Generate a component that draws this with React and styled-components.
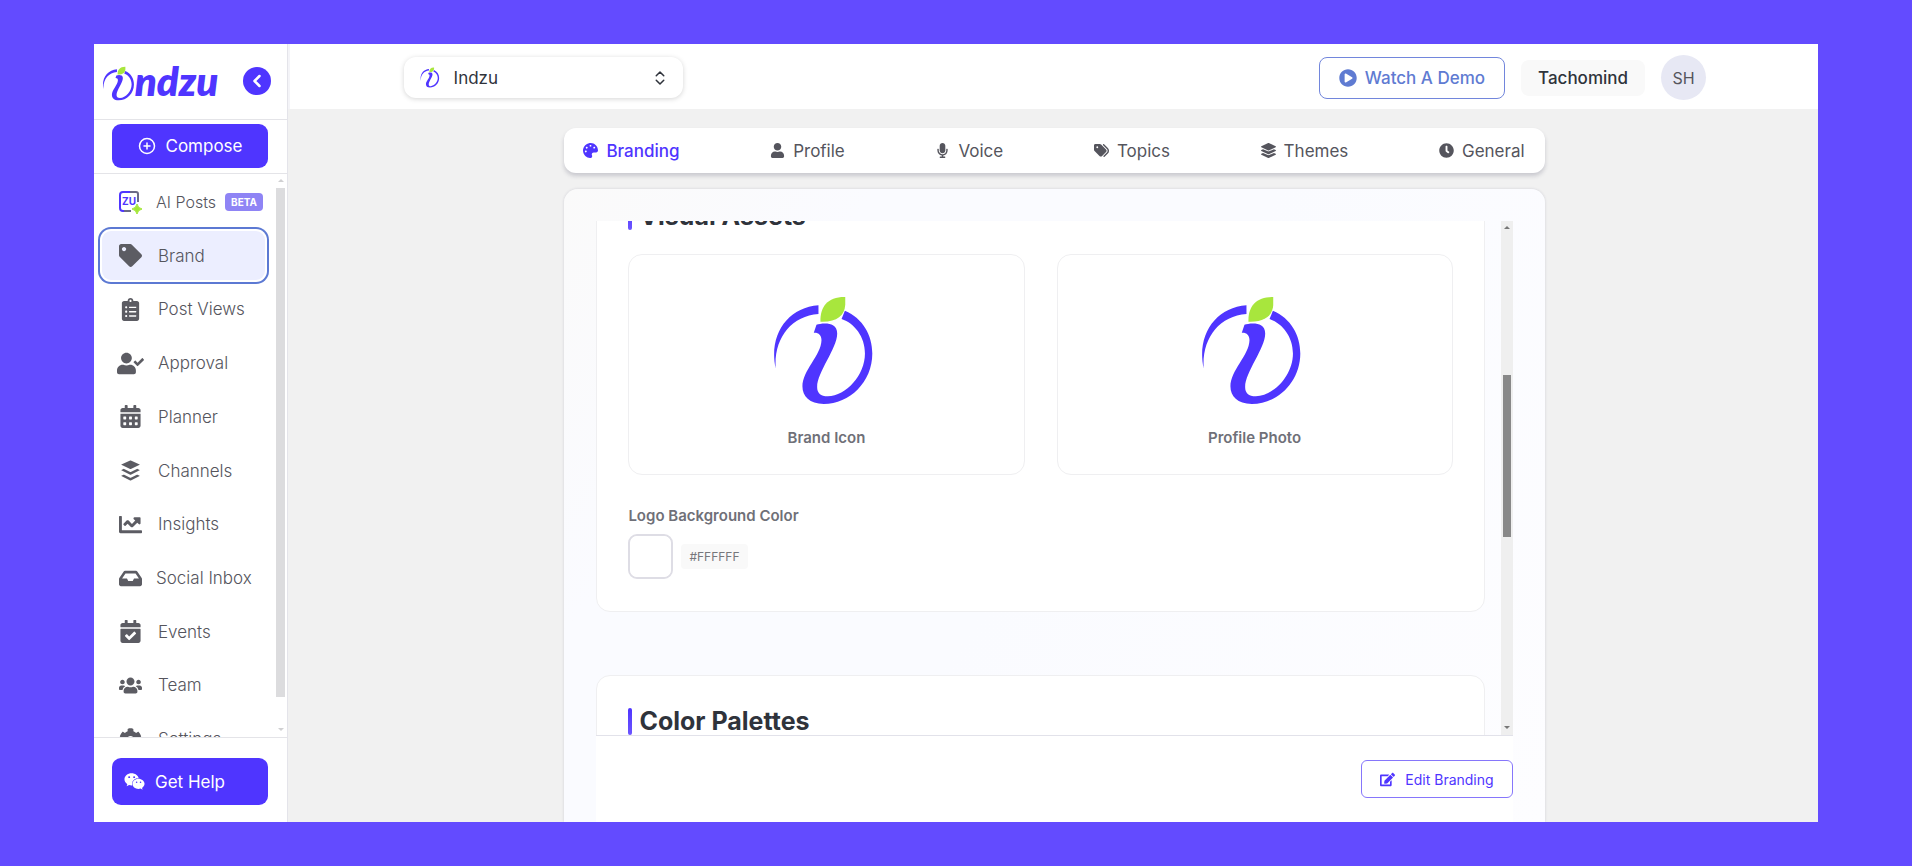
import React from "react";
import styled, { createGlobalStyle, css } from "styled-components";
import { ChevronLeft, ChevronsUpDown, CirclePlus } from "lucide-react";
import {
  FaBuffer,
  FaCalendarAlt,
  FaCalendarCheck,
  FaChartLine,
  FaClipboardList,
  FaClock,
  FaCog,
  FaEdit,
  FaInbox,
  FaLayerGroup,
  FaMicrophone,
  FaPalette,
  FaPlayCircle,
  FaTag,
  FaUser,
  FaUserCheck,
  FaUsers,
  FaWeixin,
} from "react-icons/fa";
import { FaTags } from "react-icons/fa6";

const primary = "#4f35ff";
const ink = "#2f333b";
const muted = "#55555d";

const GlobalStyle = createGlobalStyle`
  * { box-sizing: border-box; }
  body {
    margin: 0;
    background: #634bff;
    color: ${ink};
    font-family: Inter, "Open Sans", sans-serif;
    font-size: 17px;
  }
  button, select, input { font: inherit; color: inherit; }
  ul { list-style: none; margin: 0; padding: 0; }
  svg { flex: none; display: block; }
`;

const Page = styled.div`
  height: 100vh;
  min-height: 480px;
  padding: 44px 94px;
  display: flex;
`;

const Shell = styled.div`
  flex: 1;
  min-width: 0;
  display: flex;
  background: #f1f1f1;
  overflow: hidden;
`;

/* Sidebar */

const Sidebar = styled.aside`
  width: 194px;
  flex: none;
  display: flex;
  flex-direction: column;
  background: #fff;
  border-right: 1px solid #e4e4ea;
`;

const BrandBar = styled.div`
  height: 76px;
  flex: none;
  display: flex;
  align-items: center;
  justify-content: space-between;
  padding: 0 16px 2px 8px;
  border-bottom: 1px solid #e4e4e8;
`;

const Wordmark = styled.a`
  display: flex;
  align-items: flex-end;
  color: ${primary};
  text-decoration: none;
  font-family: Lato, sans-serif;
  font-size: 40px;
  line-height: 40px;
  font-style: italic;
  font-weight: 800;
`;

const CollapseButton = styled.button`
  width: 28px;
  height: 28px;
  padding: 0;
  display: grid;
  place-items: center;
  border: 0;
  border-radius: 50%;
  background: ${primary};
  color: #fff;
`;

const SideSection = styled.div`
  flex: none;
  padding: ${(p) => (p.$footer ? "20px 19px 17px 18px" : "4px 19px 5px 18px")};
  border-${(p) => (p.$footer ? "top" : "bottom")}: 1px solid #e4e4e8;
`;

const SolidButton = styled.button`
  width: 100%;
  height: ${(p) => (p.$start ? "47px" : "44px")};
  display: flex;
  align-items: center;
  justify-content: ${(p) => (p.$start ? "flex-start" : "center")};
  gap: 10px;
  padding: 0 12px;
  border: 0;
  border-radius: 9px;
  background: ${primary};
  color: #fff;
`;

const NavArea = styled.div`
  flex: 1;
  min-height: 0;
  display: flex;
  overflow: hidden;
`;

const NavList = styled.ul`
  flex: 1;
  height: 591px;
  margin-top: 1px;
  padding-left: 8px;
  display: flex;
  flex-direction: column;
`;

const NavItem = styled.li`
  flex: 1;
  display: flex;
  padding: 2px 0;
`;

const NavLink = styled.a`
  width: 163px;
  display: flex;
  align-items: center;
  gap: ${(p) => (p.$tight ? "12px" : "14px")};
  padding-left: 14px;
  border-radius: 9px;
  color: ${muted};
  font-weight: 300;
  font-size: ${(p) => (p.$small ? "16px" : "17px")};
  text-decoration: none;
  white-space: nowrap;
  ${(p) =>
    p.$active &&
    css`
      background: #eceeff;
      box-shadow: 0 0 0 2px #fff, 0 0 0 4px #5c79d3;
    `}
`;

const NavIcon = styled.span`
  width: 28px;
  flex: none;
  display: grid;
  place-items: center;
  color: #5c5c63;
  font-size: ${(p) => (p.$wide ? "27px" : "23px")};
`;

const BetaTag = styled.span`
  margin-left: -3px;
  padding: 0 6px;
  border-radius: 4px;
  background: #8f84f5;
  color: #fff;
  font-size: 10px;
  line-height: 18px;
  font-weight: 700;
`;

/* Scrollbars */

const Track = styled.div`
  flex: none;
  width: ${(p) => (p.$light ? "9px" : "12px")};
  margin: ${(p) => (p.$light ? "0 2px 0 0" : "0 0 0 16px")};
  display: flex;
  flex-direction: column;
  background: ${(p) => (p.$light ? "#fff" : "#efefef")};
`;

const Thumb = styled.div`
  flex: ${(p) => p.$size} 0 0;
  margin: 0 ${(p) => (p.$light ? "0" : "2px")};
  background: ${(p) => (p.$light ? "#dcdcde" : "#888")};
`;

const TrackSpace = styled.div`
  flex: ${(p) => p.$size} 0 0;
`;

const Arrow = styled.svg`
  width: 6px;
  height: 14px;
  align-self: center;
  fill: ${(p) => (p.$light ? "#d0d0d2" : "#777")};
`;

function Scrollbar({ before, size, after, light }) {
  return (
    <Track $light={light} aria-hidden="true">
      <Arrow $light={light} viewBox="0 0 6 14"><path d="M0 8 3 5l3 3z" /></Arrow>
      <TrackSpace $size={before} />
      <Thumb $size={size} $light={light} />
      <TrackSpace $size={after} />
      <Arrow $light={light} viewBox="0 0 6 14"><path d="M0 5l3 3 3-3z" /></Arrow>
    </Track>
  );
}

/* Header */

const Main = styled.div`
  flex: 1;
  min-width: 0;
  display: flex;
  flex-direction: column;
`;

const Header = styled.header`
  height: 65px;
  flex: none;
  display: flex;
  align-items: center;
  gap: 16px;
  padding: 2px 112px 0 116px;
  background: #fff;
  box-shadow: inset 2px 0 0 #f4f4f8;
`;

const Picker = styled.label`
  width: 279px;
  height: 41px;
  display: flex;
  align-items: center;
  gap: 14px;
  margin-right: auto;
  padding: 0 14px 0 16px;
  border-radius: 12px;
  background: #fff;
  box-shadow: 0 1px 5px rgba(0, 0, 0, 0.17);
`;

const PickerSelect = styled.select`
  flex: 1;
  appearance: none;
  border: 0;
  padding: 0;
  background: transparent;
`;

const OutlineButton = styled.button`
  height: ${(p) => (p.$small ? "38px" : "42px")};
  display: flex;
  align-items: center;
  gap: ${(p) => (p.$small ? "10px" : "8px")};
  padding: 0 ${(p) => (p.$small ? "18px" : "19px")};
  border: 1px solid ${(p) => (p.$small ? "#8676fb" : "#7286dc")};
  border-radius: ${(p) => (p.$small ? "6px" : "8px")};
  background: #fff;
  color: ${(p) => (p.$small ? primary : "#5f7bd2")};
  font-size: ${(p) => (p.$small ? "14px" : "17px")};
  font-weight: ${(p) => (p.$small ? 400 : 500)};
  white-space: nowrap;
`;

const OrgChip = styled.button`
  height: 36px;
  padding: 0 17px;
  border: 0;
  border-radius: 8px;
  background: #f9f9f9;
  font-weight: 500;
`;

const Avatar = styled.button`
  width: 45px;
  height: 45px;
  padding: 0;
  border: 0;
  border-radius: 50%;
  background: #e7e8f4;
  color: ${muted};
  font-size: 16px;
`;

/* Content */

const Content = styled.main`
  flex: 1;
  min-height: 0;
  display: flex;
  flex-direction: column;
  gap: 16px;
  padding: 19px calc(18% - 2px) 0 calc(18% + 1px);
`;

const Tabs = styled.nav`
  height: 45px;
  flex: none;
  display: flex;
  align-items: center;
  justify-content: space-between;
  padding: 0 20px 0 19px;
  border-radius: 12px;
  background: #fff;
  box-shadow: 0 3px 4px rgba(40, 40, 70, 0.2);
`;

const Tab = styled.a`
  display: flex;
  align-items: center;
  gap: 8px;
  color: ${(p) => (p.$active ? primary : muted)};
  font-weight: ${(p) => (p.$active ? 500 : 400)};
  text-decoration: none;
  svg { font-size: 15px; }
`;

const Panel = styled.section`
  flex: 1;
  min-height: 0;
  display: flex;
  flex-direction: column;
  padding: 32px 32px 0;
  border-radius: 14px 14px 0 0;
  background: linear-gradient(125deg, #fafafa, #fafbff 22%, #fafbff 50%, #fdfdff);
  box-shadow: 0 0 3px rgba(40, 40, 80, 0.16);
`;

const ScrollRegion = styled.div`
  flex: 1;
  min-height: 0;
  display: flex;
  overflow: hidden;
`;

const Sections = styled.div`
  flex: 1;
  min-width: 0;
  display: flex;
  flex-direction: column;
  gap: 63px;
  margin-top: -51px;
`;

const Card = styled.section`
  flex: none;
  padding: 32px 31px;
  border: 1px solid #efeff1;
  border-radius: 14px;
  background: #fff;
`;

const CardTitle = styled.h2`
  margin: 0 0 24px;
  display: flex;
  align-items: center;
  gap: 7px;
  font-size: 25px;
  line-height: 27px;
  font-weight: 700;
  &::before {
    content: "";
    width: 4px;
    height: 27px;
    border-radius: 2px;
    background: linear-gradient(${primary}, #6c55ff);
  }
`;

const AssetGrid = styled.div`
  display: grid;
  grid-template-columns: 1fr 1fr;
  gap: 32px;
`;

const Asset = styled.figure`
  height: 221px;
  margin: 0;
  padding-top: 40px;
  display: flex;
  flex-direction: column;
  align-items: center;
  gap: 22px;
  border: 1px solid #efeff1;
  border-radius: 14px;
`;

const AssetLabel = styled.figcaption`
  color: #6f7078;
  font-size: 15px;
  line-height: 20px;
  font-weight: 600;
`;

const FieldLabel = styled.label`
  display: block;
  margin: 31px 0 8px;
  color: #6f7078;
  font-size: 15px;
  line-height: 20px;
  font-weight: 600;
`;

const ColorRow = styled.div`
  display: flex;
  align-items: center;
  gap: 8px;
`;

const Swatch = styled.input`
  width: 45px;
  height: 45px;
  padding: 0;
  appearance: none;
  border: 2px solid #dedde5;
  border-radius: 9px;
  background: #fff;
  &::-webkit-color-swatch-wrapper { padding: 0; }
  &::-webkit-color-swatch { border: 0; border-radius: 7px; }
`;

const HexChip = styled.code`
  padding: 0 8px;
  border-radius: 4px;
  background: #f9f9f9;
  color: #77777b;
  font-family: Inter, sans-serif;
  font-size: 12px;
  line-height: 25px;
`;

const PanelFooter = styled.footer`
  height: 87px;
  flex: none;
  display: flex;
  align-items: flex-start;
  justify-content: flex-end;
  padding-top: 24px;
  border-top: 1px solid #e2e2ea;
  background: #fff;
`;

function IndzuMark({ height, title, box = "90 45 310 332" }) {
  return (
    <svg height={height} viewBox={box} role="img" aria-label={title}>
      <path fill={primary} d="M104 265C82 165 140 82 232 76V102C150 108 98 175 104 265Z" />
      <path
        fill={primary}
        d="M311 92C365 115 393 165 393 220C393 305 325 371 248 371C205 371 184 348 184 318C184 270 240 225 241 180C241 165 232 157 218 158L226 134C240 130 288 122 288 160C288 205 228 275 228 320C228 338 238 348 260 348C315 346 371 285 371 220C371 170 340 130 301 117Z"
      />
      <path fill="#a8e63d" d="M312 51V75C310 108 285 127 238 125C236 80 260 50 312 51Z" />
    </svg>
  );
}

function AiPostsIcon() {
  return (
    <svg width="24" height="24" viewBox="0 0 24 24">
      <path d="M13 21H5a3 3 0 0 1-3-3V5a3 3 0 0 1 3-3h8" fill="none" stroke={primary} strokeWidth="2" />
      <path d="M12 2h6a2 2 0 0 1 2 2v8M6 21h7" fill="none" stroke="#6b6b86" strokeWidth="2" />
      <text x="11" y="15" textAnchor="middle" fontSize="10" fontWeight="700" fill={primary}>ZU</text>
      <path d="M19 14q.8 4.200 5 5q-4.200.8-5 5q-.8-4.200-5-5q4.200-.8 5-5z" fill="#a2e635" stroke="#a2e635" />
    </svg>
  );
}

const navItems = [
  { label: "AI Posts", icon: AiPostsIcon, beta: true, tight: true },
  { label: "Brand", icon: FaTag, active: true },
  { label: "Post Views", icon: FaClipboardList },
  { label: "Approval", icon: FaUserCheck, wide: true },
  { label: "Planner", icon: FaCalendarAlt },
  { label: "Channels", icon: FaBuffer },
  { label: "Insights", icon: FaChartLine },
  { label: "Social Inbox", icon: FaInbox, tight: true },
  { label: "Events", icon: FaCalendarCheck },
  { label: "Team", icon: FaUsers },
  { label: "Settings", icon: FaCog },
];

const tabs = [
  { label: "Branding", icon: FaPalette, active: true },
  { label: "Profile", icon: FaUser },
  { label: "Voice", icon: FaMicrophone },
  { label: "Topics", icon: FaTags },
  { label: "Themes", icon: FaLayerGroup },
  { label: "General", icon: FaClock },
];

export default function App() {
  return (
    <Page>
      <GlobalStyle />
      <Shell>
        <Sidebar>
          <BrandBar>
            <Wordmark href="#home" aria-label="indzu">
              <IndzuMark height={35} title="i" />
              ndzu
            </Wordmark>
            <CollapseButton type="button" aria-label="Collapse sidebar">
              <ChevronLeft size={20} strokeWidth={3} />
            </CollapseButton>
          </BrandBar>
          <SideSection>
            <SolidButton type="button">
              <CirclePlus size={18} />
              Compose
            </SolidButton>
          </SideSection>
          <NavArea>
            <NavList>
              {navItems.map(({ label, icon: Icon, active, beta, tight, wide }) => (
                <NavItem key={label}>
                  <NavLink
                    href="#nav"
                    $active={active}
                    $tight={tight}
                    $small={beta}
                    aria-current={active ? "page" : undefined}
                  >
                    <NavIcon $wide={wide}><Icon /></NavIcon>
                    {label}
                    {beta && <BetaTag>BETA</BetaTag>}
                  </NavLink>
                </NavItem>
              ))}
            </NavList>
            <Scrollbar light before={0} size={510} after={26} />
          </NavArea>
          <SideSection $footer>
            <SolidButton type="button" $start>
              <FaWeixin size={21} />
              Get Help
            </SolidButton>
          </SideSection>
        </Sidebar>

        <Main>
          <Header>
            <Picker>
              <IndzuMark height={21} title="Indzu" />
              <PickerSelect aria-label="Brand" defaultValue="indzu">
                <option value="indzu">Indzu</option>
              </PickerSelect>
              <ChevronsUpDown size={18} strokeWidth={2} />
            </Picker>
            <OutlineButton type="button">
              <FaPlayCircle size={18} />
              Watch A Demo
            </OutlineButton>
            <OrgChip type="button">Tachomind</OrgChip>
            <Avatar type="button">SH</Avatar>
          </Header>

          <Content>
            <Tabs>
              {tabs.map(({ label, icon: Icon, active }) => (
                <Tab key={label} href="#tab" $active={active}>
                  <Icon />
                  {label}
                </Tab>
              ))}
            </Tabs>

            <Panel>
              <ScrollRegion>
                <Sections>
                  <Card>
                    <CardTitle>Visual Assets</CardTitle>
                    <AssetGrid>
                      {["Brand Icon", "Profile Photo"].map((name) => (
                        <Asset key={name}>
                          <IndzuMark height={111} title={name} box="90 45 332 332" />
                          <AssetLabel>{name}</AssetLabel>
                        </Asset>
                      ))}
                    </AssetGrid>
                    <FieldLabel htmlFor="logo-bg">Logo Background Color</FieldLabel>
                    <ColorRow>
                      <Swatch id="logo-bg" type="color" defaultValue="#ffffff" />
                      <HexChip>#FFFFFF</HexChip>
                    </ColorRow>
                  </Card>
                  <Card>
                    <CardTitle>Color Palettes</CardTitle>
                  </Card>
                </Sections>
                <Scrollbar before={140} size={162} after={184} />
              </ScrollRegion>
              <PanelFooter>
                <OutlineButton type="button" $small>
                  <FaEdit size={15} />
                  Edit Branding
                </OutlineButton>
              </PanelFooter>
            </Panel>
          </Content>
        </Main>
      </Shell>
    </Page>
  );
}
